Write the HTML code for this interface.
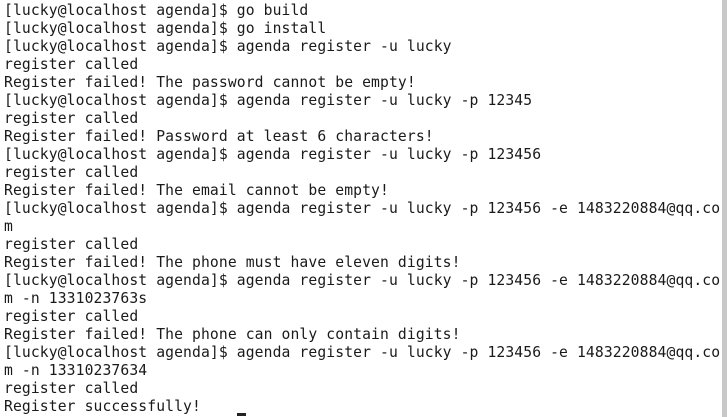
<!DOCTYPE html>
<html><head><meta charset="utf-8"><style>
html,body{margin:0;padding:0;background:#fff;width:727px;height:417px;overflow:hidden;}
.t{position:absolute;left:4px;top:2px;font-family:"DejaVu Sans Mono","Liberation Mono",monospace;font-size:14.7px;letter-spacing:0.11px;line-height:18px;color:#1a1a1a;white-space:pre;}
.sb{position:absolute;left:722px;top:0;width:5px;height:417px;background:#c8c8c8;}
.cur{position:absolute;left:237px;top:413px;width:9px;height:3px;background:#222;}
</style></head><body>
<div class="t">[lucky@localhost agenda]$ go build
[lucky@localhost agenda]$ go install
[lucky@localhost agenda]$ agenda register -u lucky
register called
Register failed! The password cannot be empty!
[lucky@localhost agenda]$ agenda register -u lucky -p 12345
register called
Register failed! Password at least 6 characters!
[lucky@localhost agenda]$ agenda register -u lucky -p 123456
register called
Register failed! The email cannot be empty!
[lucky@localhost agenda]$ agenda register -u lucky -p 123456 -e 1483220884@qq.co
m
register called
Register failed! The phone must have eleven digits!
[lucky@localhost agenda]$ agenda register -u lucky -p 123456 -e 1483220884@qq.co
m -n 1331023763s
register called
Register failed! The phone can only contain digits!
[lucky@localhost agenda]$ agenda register -u lucky -p 123456 -e 1483220884@qq.co
m -n 13310237634
register called
Register successfully!</div>
<div class="sb"></div>
<div class="cur"></div>
</body></html>
